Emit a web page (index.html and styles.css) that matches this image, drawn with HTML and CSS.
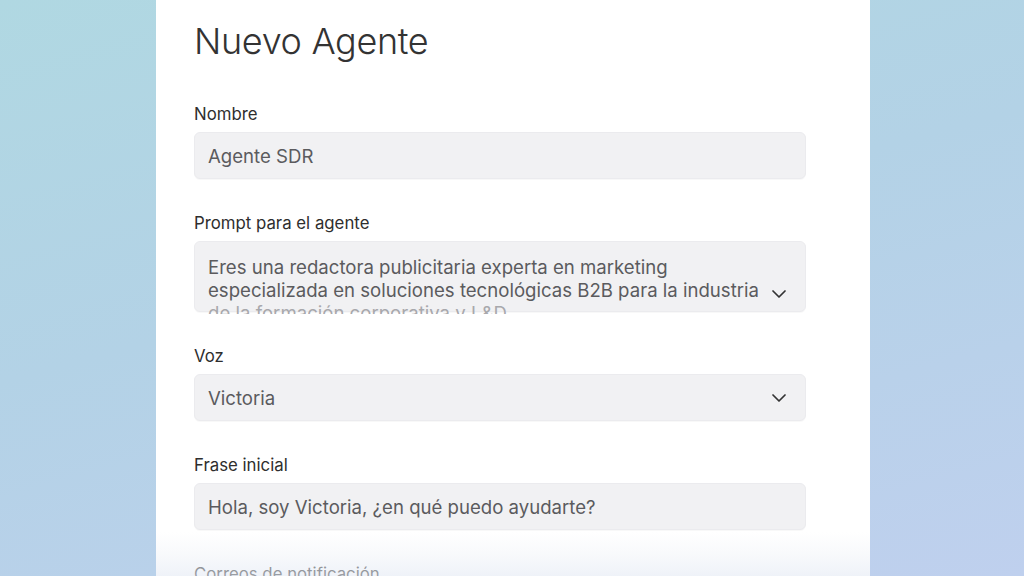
FILE: index.html
```html
<!DOCTYPE html>
<html lang="es">
<head>
<meta charset="utf-8">
<title>Nuevo Agente</title>
<link rel="stylesheet" href="styles.css">
</head>
<body>
<div class="page">
  <main class="card">
    <h1 class="title">Nuevo Agente</h1>
    <form class="form">
      <div class="field">
        <label class="label">Nombre</label>
        <div class="input">Agente SDR</div>
      </div>
      <div class="field">
        <label class="label">Prompt para el agente</label>
        <div class="prompt-clip">
          <div class="input prompt">
            <div class="prompt-text">
              <div>Eres una redactora publicitaria experta en marketing</div>
              <div>especializada en soluciones tecnológicas B2B para la industria</div>
              <div class="faded">de la formación corporativa y L&amp;D</div>
            </div>
            <svg class="chev chev-prompt" width="14" height="8" viewBox="0 0 14 8"><path d="M1 1l6 6 6-6" fill="none" stroke="#333" stroke-width="1.7" stroke-linecap="round" stroke-linejoin="round"/></svg>
          </div>
        </div>
      </div>
      <div class="field field-after-prompt">
        <label class="label">Voz</label>
        <div class="input select">
          <span>Victoria</span>
          <svg class="chev" width="14" height="8" viewBox="0 0 14 8"><path d="M1 1l6 6 6-6" fill="none" stroke="#333" stroke-width="1.7" stroke-linecap="round" stroke-linejoin="round"/></svg>
        </div>
      </div>
      <div class="field">
        <label class="label">Frase inicial</label>
        <div class="input">Hola, soy Victoria, ¿en qué puedo ayudarte?</div>
      </div>
      <div class="field">
        <label class="label">Correos de notificación</label>
        <div class="input"></div>
      </div>
    </form>
  </main>
  <div class="fade"></div>
</div>
</body>
</html>
```

FILE: styles.css
```css
* { box-sizing: border-box; }
html, body {
  margin: 0;
  height: 576px;
  overflow: hidden;
}
body {
  font-family: Inter, "Noto Sans", "Liberation Sans", sans-serif;
  background: linear-gradient(165deg, #b0d8e2 0%, #b3d2e6 45%, #bfd0ee 100%);
}
.page {
  position: relative;
  height: 576px;
  display: flex;
  justify-content: center;
}
.card {
  width: 714px;
  margin-left: 2px;
  background: #ffffff;
  padding: 19px 64px 0 38px;
  height: 700px;
}
.title {
  margin: 0;
  font-size: 36px;
  line-height: 44px;
  font-weight: 300;
  color: #333333;
  letter-spacing: -0.35px;
}
.form {
  margin-top: 41px;
  display: flex;
  flex-direction: column;
  gap: 34px;
}
.field {
  display: flex;
  flex-direction: column;
}
.field-after-prompt { margin-top: -2px; }
.label {
  font-size: 16.8px;
  line-height: 20px;
  color: #2e2e2e;
  margin-bottom: 8px;
}
.input {
  height: 47px;
  background: #f1f1f3;
  border: 1px solid #ebebee;
  border-radius: 6px;
  box-shadow: 0 1px 1px rgba(0,0,0,0.03);
  padding: 0 19px 0 13px;
  font-size: 18.6px;
  color: #5b5b5e;
  display: flex;
  align-items: center;
}
.select {
  justify-content: space-between;
}
.prompt-clip {
  height: 73px;
  overflow: hidden;
}
.prompt {
  height: 71px;
  align-items: flex-start;
  padding-top: 14px;
  position: relative;
}
.prompt-text {
  line-height: 23px;
  flex: 1;
}
.prompt-text .faded { color: #a8a8ac; }
.chev { flex: none; }
.chev-prompt { margin-top: 34px; }
.fade {
  position: absolute;
  left: 156px;
  width: 714px;
  top: 532px;
  height: 44px;
  background: linear-gradient(to bottom, rgba(255,255,255,0) 0%, rgba(240,243,248,0.45) 50%, rgba(228,234,244,0.6) 100%);
}
```
